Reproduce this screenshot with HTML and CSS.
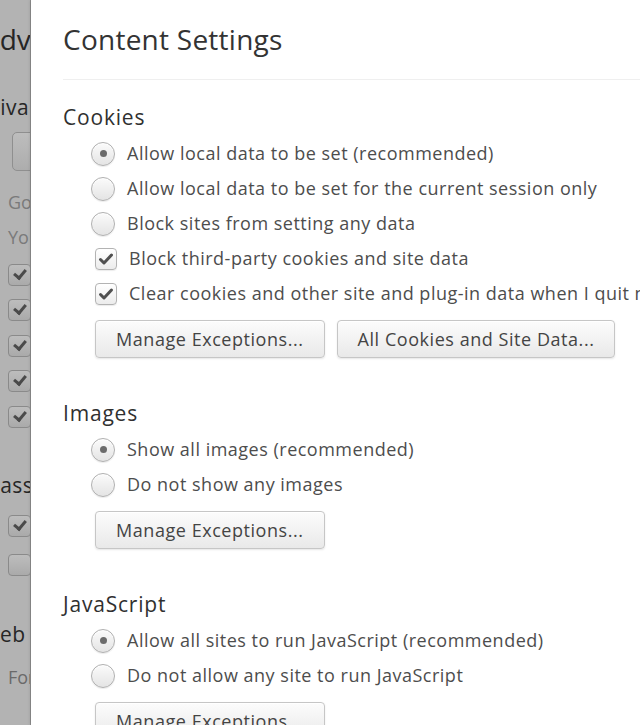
FILE: index.html
```html
<!DOCTYPE html>
<html>
<head>
<meta charset="utf-8">
<title>Content Settings</title>
<link rel="stylesheet" href="styles.css">
</head>
<body>
<div class="app">
  <div class="page">
    <div class="page-inner">
      <div class="page-title">Advanced settings</div>
      <div class="page-section sec1">Privacy</div>
      <div class="page-btn">Content settings...</div>
      <div class="page-note first">Google Chrome may use web services</div>
      <div class="page-note">You can optionally disable</div>
      <div class="page-checks">
        <span class="page-check on"></span>
        <span class="page-check on"></span>
        <span class="page-check on"></span>
        <span class="page-check on"></span>
        <span class="page-check on"></span>
      </div>
      <div class="page-section sec2">Passwords and forms</div>
      <div class="page-checks two">
        <span class="page-check on"></span>
        <span class="page-check"></span>
      </div>
      <div class="page-section sec3">Web content</div>
      <div class="page-note font">Font size:</div>
    </div>
  </div>
  <div class="overlay">
    <div class="dialog-header">
      <h1 class="dialog-title">Content Settings</h1>
    </div>
    <div class="dialog-body">
      <section class="group">
        <h2 class="group-title">Cookies</h2>
        <div class="row"><span class="radio checked"></span><span class="label">Allow local data to be set (recommended)</span></div>
        <div class="row"><span class="radio"></span><span class="label">Allow local data to be set for the current session only</span></div>
        <div class="row"><span class="radio"></span><span class="label">Block sites from setting any data</span></div>
        <div class="row"><span class="checkbox checked"></span><span class="label">Block third-party cookies and site data</span></div>
        <div class="row"><span class="checkbox checked"></span><span class="label">Clear cookies and other site and plug-in data when I quit my browser</span></div>
        <div class="buttons">
          <button class="btn">Manage Exceptions...</button>
          <button class="btn">All Cookies and Site Data...</button>
        </div>
      </section>
      <section class="group">
        <h2 class="group-title">Images</h2>
        <div class="row"><span class="radio checked"></span><span class="label">Show all images (recommended)</span></div>
        <div class="row"><span class="radio"></span><span class="label">Do not show any images</span></div>
        <div class="buttons">
          <button class="btn">Manage Exceptions...</button>
        </div>
      </section>
      <section class="group">
        <h2 class="group-title">JavaScript</h2>
        <div class="row"><span class="radio checked"></span><span class="label">Allow all sites to run JavaScript (recommended)</span></div>
        <div class="row"><span class="radio"></span><span class="label">Do not allow any site to run JavaScript</span></div>
        <div class="buttons">
          <button class="btn">Manage Exceptions...</button>
        </div>
      </section>
    </div>
  </div>
</div>
</body>
</html>
```

FILE: styles.css
```css
html, body {
  margin: 0;
  padding: 0;
  height: 100%;
  background: #ffffff;
  font-family: "Open Sans", "Noto Sans", "DejaVu Sans", sans-serif;
}

.app {
  display: flex;
  width: 640px;
  height: 725px;
  overflow: hidden;
}

/* dimmed page behind the overlay */
.page {
  flex: 0 0 30px;
  width: 30px;
  background: #b3b3b3;
  border-right: 1px solid #8e8e8e;
  overflow: hidden;
  color: #2b2b2b;
}

.page-inner {
  width: 400px;
  margin-left: -32px;
  white-space: nowrap;
}

.page-title {
  font-size: 28px;
  line-height: 38px;
  margin-top: 20px;
  margin-left: 14px;
  color: #262626;
}

.page-section {
  font-size: 21px;
  line-height: 30px;
  letter-spacing: 0.5px;
  color: #262626;
}

.page-section.sec1 {
  margin-top: 34px;
  margin-left: 10px;
}

.page-btn {
  box-sizing: border-box;
  margin-top: 10px;
  margin-left: 44px;
  height: 39px;
  width: 200px;
  border: 1px solid #8f8f8f;
  border-radius: 5px;
  background: linear-gradient(#bdbdbd, #adadad);
  color: transparent;
  font-size: 18px;
}

.page-note {
  font-size: 18px;
  line-height: 35px;
  margin-left: 40px;
  color: #7a7a7a;
}

.page-note.first {
  margin-top: 14px;
}

.page-note.font {
  margin-top: 11px;
  color: #6a6a6a;
}

.page-checks {
  display: flex;
  flex-direction: column;
  gap: 13.5px;
  margin-top: 8.5px;
  margin-left: 40px;
}

.page-checks.two {
  margin-top: 15px;
  gap: 17px;
}

.page-check {
  display: block;
  box-sizing: border-box;
  width: 23px;
  height: 22px;
  border: 1px solid #8a8a8a;
  border-radius: 4px;
  background: linear-gradient(#bdbdbd, #aaaaaa);
  position: relative;
}

.page-check.on::after {
  content: "";
  position: absolute;
  left: 5px;
  top: 4px;
  width: 9px;
  height: 5px;
  border-left: 3px solid #4a4a4a;
  border-bottom: 3px solid #4a4a4a;
  transform: rotate(-50deg);
}

.page-section.sec2 {
  margin-top: 42px;
  margin-left: 19px;
}

.page-section.sec3 {
  margin-top: 43px;
  margin-left: 12px;
}

/* overlay dialog */
.overlay {
  flex: 1 1 auto;
  min-width: 0;
  background: #ffffff;
  box-shadow: -1px 0 3px rgba(0, 0, 0, 0.12);
  overflow: hidden;
  white-space: nowrap;
}

.dialog-header {
  margin-left: 32px;
  padding: 20px 0 21px;
  border-bottom: 1px solid #efefef;
}

.dialog-title {
  margin: 0;
  font-size: 28px;
  line-height: 38px;
  letter-spacing: 0.25px;
  font-weight: normal;
  color: #333333;
}

.dialog-body {
  padding: 22px 0 0 32px;
  display: flex;
  flex-direction: column;
  gap: 40px;
}

.group-title {
  margin: 0 0 4px;
  font-size: 21px;
  line-height: 30px;
  letter-spacing: 0.8px;
  font-weight: normal;
  color: #303030;
}

.row {
  display: flex;
  align-items: center;
  height: 35px;
  font-size: 18px;
  line-height: 35px;
  letter-spacing: 0.5px;
  color: #4d4d4d;
}

.radio {
  flex: 0 0 auto;
  box-sizing: border-box;
  width: 24px;
  height: 24px;
  margin-left: 28px;
  margin-right: 12px;
  border: 1px solid #b0b0b0;
  border-radius: 50%;
  background: linear-gradient(#fbfbfb, #e4e4e4);
  box-shadow: 0 1px 1px rgba(0, 0, 0, 0.08), inset 0 1px 1px #ffffff;
  display: flex;
  align-items: center;
  justify-content: center;
}

.radio.checked::after {
  content: "";
  width: 7px;
  height: 7px;
  border-radius: 50%;
  background: #6b6b6b;
}

.checkbox {
  flex: 0 0 auto;
  box-sizing: border-box;
  width: 22px;
  height: 22px;
  margin-left: 32px;
  margin-right: 12px;
  border: 1px solid #b3b3b3;
  border-radius: 4px;
  background: linear-gradient(#ffffff, #ececec);
  box-shadow: 0 1px 1px rgba(0, 0, 0, 0.08);
}

.checkbox.checked {
  background-image: url("data:image/svg+xml;utf8,<svg xmlns='http://www.w3.org/2000/svg' width='20' height='20' viewBox='0 0 20 20'><path d='M4.5 10.5 L8 14 L15.5 6' fill='none' stroke='%23505050' stroke-width='3' stroke-linecap='round' stroke-linejoin='round'/></svg>"), linear-gradient(#ffffff, #ececec);
  background-repeat: no-repeat;
  background-position: center;
}

.label {
  display: block;
}

.buttons {
  display: flex;
  gap: 12px;
  margin-top: 9px;
  margin-left: 32px;
}

.btn {
  box-sizing: border-box;
  height: 38px;
  padding: 0 20px;
  font-family: "Open Sans", "Noto Sans", "DejaVu Sans", sans-serif;
  font-size: 18px;
  letter-spacing: 0.55px;
  color: #444444;
  background: linear-gradient(#fcfcfc, #e9e9e9);
  border: 1px solid #c6c6c6;
  border-radius: 4px;
  box-shadow: 0 1px 2px rgba(0, 0, 0, 0.1), inset 0 1px 0 #ffffff;
  white-space: nowrap;
}
```
